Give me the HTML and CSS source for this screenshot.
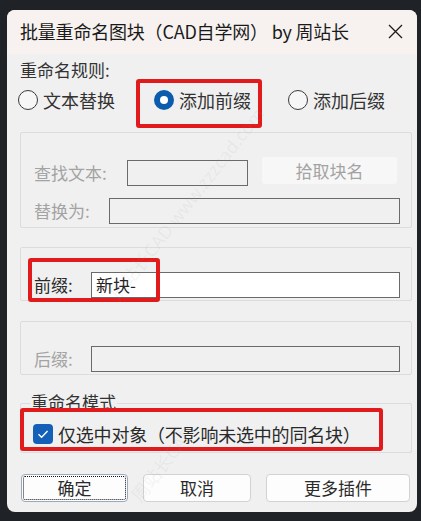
FILE: index.html
```html
<!DOCTYPE html>
<html lang="zh-CN">
<head>
<meta charset="utf-8">
<title>批量重命名图块</title>
<link rel="stylesheet" href="styles.css">
</head>
<body>
<div class="dialog">
  <div class="titlebar">
    <span class="title">批量重命名图块（CAD自学网） by 周站长</span>
    <svg class="close" width="15" height="15" viewBox="0 0 15 15"><path d="M1 1L14 14M14 1L1 14" stroke="#1c1c1c" stroke-width="1.3" fill="none"/></svg>
  </div>
  <div class="content">
    <div class="rule-label">重命名规则:</div>
    <div class="radios">
      <div class="radio r1"><span class="circle"></span><span class="rtext">文本替换</span></div>
      <div class="radio r2"><span class="circle on"></span><span class="rtext">添加前缀</span></div>
      <div class="radio r3"><span class="circle"></span><span class="rtext">添加后缀</span></div>
    </div>

    <div class="group g1">
      <div class="row row-find">
        <span class="lbl dis lbl-find">查找文本:</span>
        <span class="input in-find"></span>
        <span class="btn-pick">拾取块名</span>
      </div>
      <div class="row row-rep">
        <span class="lbl dis lbl-rep">替换为:</span>
        <span class="input in-rep"></span>
      </div>
    </div>

    <div class="group g2">
      <div class="row row-single">
        <span class="lbl lbl-short">前缀:</span>
        <span class="input in-long white">新块-</span>
      </div>
    </div>

    <div class="group g3">
      <div class="row row-single">
        <span class="lbl dis lbl-short">后缀:</span>
        <span class="input in-long"></span>
      </div>
    </div>

    <div class="group g4">
      <span class="legend">重命名模式</span>
      <div class="check-row">
        <span class="checkbox"><svg width="20" height="20" viewBox="0 0 20 20"><path d="M5.5 10.2L8.6 13.2L14.6 7" stroke="#fff" stroke-width="1.4" fill="none"/></svg></span>
        <span class="ctext">仅选中对象（不影响未选中的同名块）</span>
      </div>
    </div>

    <div class="buttons">
      <span class="btn b-ok"><span class="focus">确定</span></span>
      <span class="btn b-cancel">取消</span>
      <span class="btn b-more">更多插件</span>
    </div>
  </div>

  <span class="hl hl1"></span>
  <span class="hl hl2"></span>
  <span class="hl hl3"></span>

  <span class="wm wm1">周站长CAD www.zzzcad.com</span>
  <span class="wm wm2">周站长CAD</span>
</div>
</body>
</html>
```

FILE: styles.css
```css
* { box-sizing: border-box; }
html, body { margin: 0; padding: 0; }
body {
  width: 421px;
  height: 521px;
  background: #1f2226;
  overflow: hidden;
  font-family: "Noto Sans CJK SC", "Noto Sans", sans-serif;
  color: #1e1e1e;
}
.dialog {
  position: relative;
  margin: 10px 0 0 7px;
  width: 410px;
  height: 502px;
  background: #f0f0f0;
  border-radius: 8px;
  overflow: hidden;
}
.titlebar {
  height: 44px;
  background: #f7f2f0;
  display: flex;
  align-items: center;
  justify-content: space-between;
  padding: 0 14px 0 13px;
}
.title {
  font-family: "Noto Sans CJK SC", sans-serif;
  font-size: 18px;
  letter-spacing: -0.2px;
  color: #1a1a1a;
  line-height: 24px;
  margin-top: -2px;
}
.close { display: block; margin-top: -2px; }

.content { padding: 0 5px 0 13px; }

.rule-label {
  margin-top: 5px;
  height: 22px;
  line-height: 22px;
  font-size: 17px;
  color: #333;
}
.radios {
  display: flex;
  margin-top: 8px;
  height: 22px;
  margin-left: -2px;
}
.radio { display: flex; align-items: center; height: 22px; }
.r1 { width: 136px; }
.r2 { width: 134px; }
.circle {
  width: 20px;
  height: 20px;
  border-radius: 50%;
  border: 1px solid #3a3a3a;
  background: #f6f6f6;
  position: relative;
}
.circle.on {
  border: none;
  background: #0b5cad;
}
.circle.on::after {
  content: "";
  position: absolute;
  left: 6px;
  top: 6px;
  width: 8px;
  height: 8px;
  border-radius: 50%;
  background: #fff;
}
.rtext {
  margin-left: 5px;
  font-size: 18px;
  line-height: 22px;
  color: #333;
}

.group {
  border: 1px solid #dcdcdc;
  border-radius: 2px;
  width: 392px;
}
.g1 { margin-top: 21px; height: 96px; padding-top: 24px; }
.g2 { margin-top: 19px; height: 54px; padding-top: 24px; }
.g3 { margin-top: 20px; height: 54px; padding-top: 24px; }
.g4 { margin-top: 28px; height: 50px; position: relative; }

.row { display: flex; align-items: flex-start; }
.lbl {
  font-size: 17px;
  line-height: 26px;
  height: 26px;
  padding-left: 13px;
  color: #2a2a2a;
}
.lbl.dis { color: #a3a3a3; }
.row-find .lbl, .row-find .input { margin-top: 3px; }
.lbl-find { width: 106px; }
.lbl-rep { width: 88px; }
.lbl-short { width: 70px; }
.row-rep { margin-top: 12px; }

.input {
  height: 26px;
  border: 1px solid #6a6a6a;
  background: #f0f0f0;
  font-size: 17px;
  line-height: 24px;
  padding-left: 4px;
  color: #222;
}
.input.white { background: #fff; }
.in-find { width: 121px; }
.in-rep { width: 291px; }
.in-long { width: 309px; }
.btn-pick {
  margin-left: 14px;
  width: 135px;
  height: 27px;
  background: #f7f7f7;
  border-radius: 3px;
  text-align: center;
  font-size: 17px;
  line-height: 27px;
  color: #a3a3a3;
}

.legend {
  position: absolute;
  left: 9px;
  top: -13px;
  padding: 0 1px;
  background: #f0f0f0;
  font-size: 17px;
  line-height: 22px;
  color: #333;
}
.check-row {
  display: flex;
  align-items: center;
  margin-top: 20px;
  padding-left: 12px;
  height: 20px;
}
.checkbox {
  width: 20px;
  height: 20px;
  border-radius: 4px;
  background: #1460b8;
  display: block;
}
.checkbox svg { display: block; }
.ctext {
  margin-left: 5px;
  font-size: 18px;
  letter-spacing: -0.2px;
  line-height: 22px;
  color: #2a2a2a;
}

.buttons {
  display: flex;
  gap: 15px;
  margin-top: 21px;
  margin-left: 1px;
}
.btn {
  height: 28px;
  background: #fdfdfd;
  border: 1px solid #d2d2d2;
  border-radius: 4px;
  font-size: 17px;
  line-height: 26px;
  text-align: center;
  color: #2a2a2a;
}
.b-ok { width: 107px; padding: 1px; border-color: #9ab; }
.b-ok .focus {
  display: block;
  height: 24px;
  line-height: 22px;
  border: 1px dotted #111;
  border-radius: 2px;
}
.b-cancel { width: 108px; }
.b-more { width: 144px; }

.hl {
  position: absolute;
  border: 4px solid #e11b1b;
  border-radius: 3px;
}
.hl1 { left: 129px; top: 69px; width: 126px; height: 49px; }
.hl2 { left: 21px; top: 248px; width: 132px; height: 44px; }
.hl3 { left: 13px; top: 398px; width: 363px; height: 43px; }

.wm {
  position: absolute;
  font-size: 18px;
  color: rgba(150, 150, 150, 0.1);
  transform: rotate(-52deg);
  white-space: nowrap;
  pointer-events: none;
  font-family: "Noto Sans", "Noto Sans CJK SC", sans-serif;
}
.wm1 { left: 60px; top: 180px; }
.wm2 { left: 110px; top: 440px; }
```
